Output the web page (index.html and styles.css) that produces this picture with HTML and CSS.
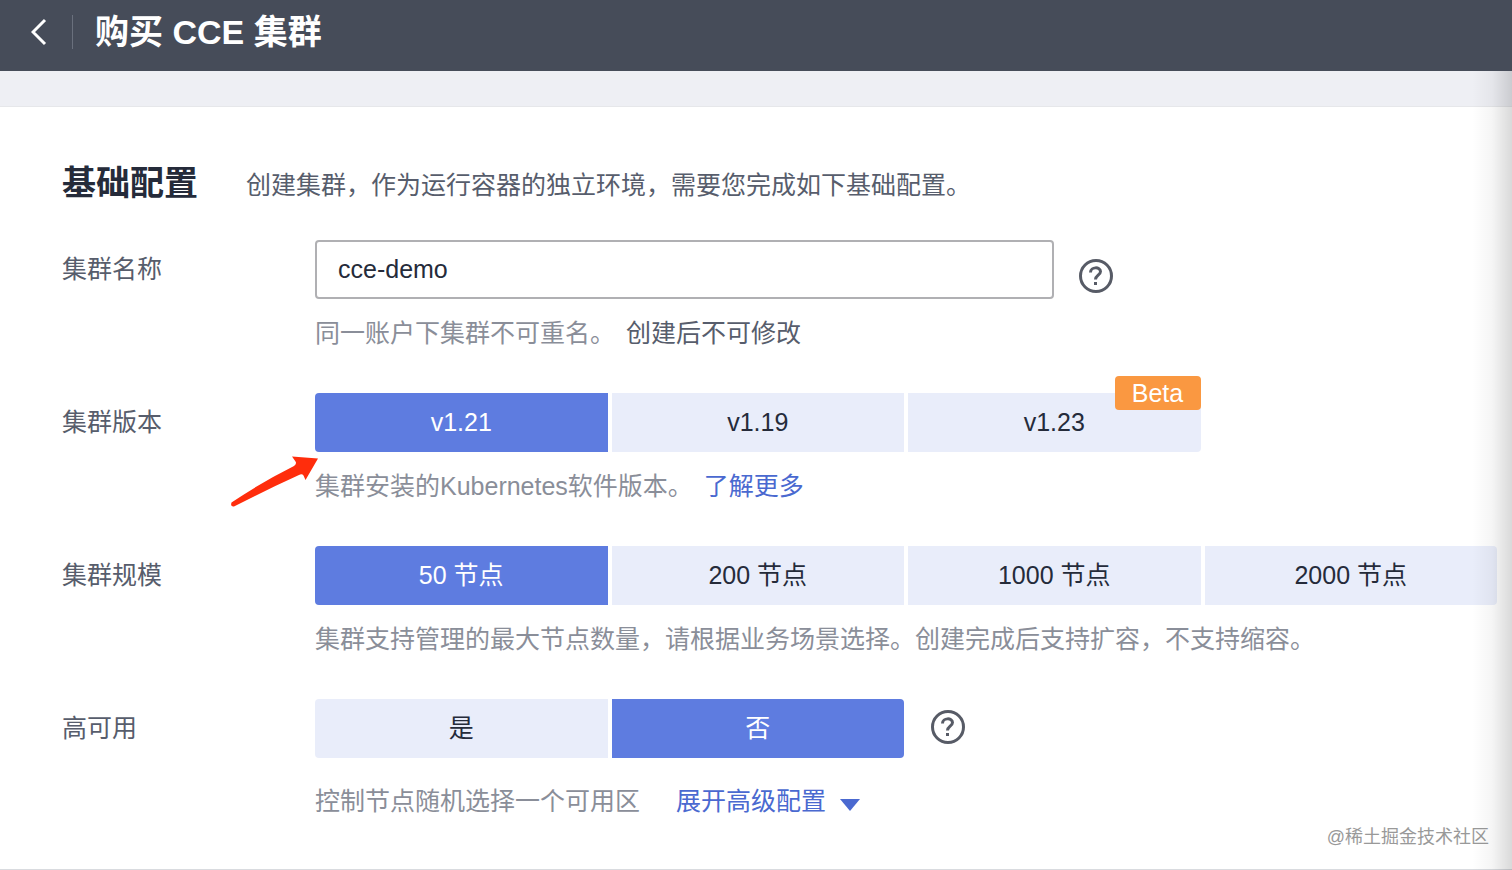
FILE: index.html
```html
<!DOCTYPE html>
<html lang="zh-CN">

<head>
    <meta charset="UTF-8">
    <meta name="viewport" content="width=device-width, initial-scale=1.0">
    <title>购买 CCE 集群</title>
    <link rel="stylesheet" href="styles.css">
</head>

<body>
    <header class="header">
        <a href="#" class="back" aria-label="返回">
            <svg width="16" height="28" viewBox="0 0 16 28"><path d="M14 2 L2 14 L14 26" /></svg>
        </a>
        <h1>购买 CCE 集群</h1>
    </header>
    <main class="content">
        <div class="section-title">
            <h2>基础配置</h2>
            <p>创建集群，作为运行容器的独立环境，需要您完成如下基础配置。</p>
        </div>
        <form class="form">
            <div class="row">
                <label class="name" for="cluster-name">集群名称</label>
                <div class="field">
                    <div class="control">
                        <input type="text" id="cluster-name" value="cce-demo">
                        <button type="button" class="help low" aria-label="帮助">
                            <svg width="34" height="34" viewBox="0 0 34 34"><circle cx="17" cy="17" r="15.5" /><path d="M11.5 13.5 C11.5 7.5 21.5 7.5 21.5 12.5 C21.5 16 16.5 16.5 16.5 20.5" /><rect x="15" y="23" width="3" height="3" /></svg>
                        </button>
                    </div>
                    <p class="hint">同一账户下集群不可重名。 <span class="dark">创建后不可修改</span></p>
                </div>
            </div>
            <div class="row">
                <span class="name" id="version">集群版本</span>
                <div class="field">
                    <div class="options" role="group" aria-labelledby="version">
                        <button type="button" class="option first active">v1.21</button>
                        <button type="button" class="option">v1.19</button>
                        <button type="button" class="option last">v1.23<span class="badge">Beta</span></button>
                    </div>
                    <p class="hint">集群安装的Kubernetes软件版本。 <a href="#">了解更多</a></p>
                    <svg class="arrow" width="90" height="54" viewBox="0 0 90 54"><path d="M1.5 48.5 Q32 28 64 12 Q67 10 65.5 7.5 L62 2.5 L88 4.5 L75.5 26 L73.5 21.5 Q72 19.5 69 21 Q36 36 4 52.5 Q0 53 1.5 48.5 Z" /></svg>
                </div>
            </div>
            <div class="row">
                <span class="name" id="scale">集群规模</span>
                <div class="field">
                    <div class="options" role="group" aria-labelledby="scale">
                        <button type="button" class="option first active">50 节点</button>
                        <button type="button" class="option">200 节点</button>
                        <button type="button" class="option">1000 节点</button>
                        <button type="button" class="option last">2000 节点</button>
                    </div>
                    <p class="hint">集群支持管理的最大节点数量，请根据业务场景选择。创建完成后支持扩容，不支持缩容。</p>
                </div>
            </div>
            <div class="row">
                <span class="name" id="ha">高可用</span>
                <div class="field">
                    <div class="options" role="group" aria-labelledby="ha">
                        <button type="button" class="option first">是</button>
                        <button type="button" class="option last active">否</button>
                        <button type="button" class="help side" aria-label="帮助">
                            <svg width="34" height="34" viewBox="0 0 34 34"><circle cx="17" cy="17" r="15.5" /><path d="M11.5 13.5 C11.5 7.5 21.5 7.5 21.5 12.5 C21.5 16 16.5 16.5 16.5 20.5" /><rect x="15" y="23" width="3" height="3" /></svg>
                        </button>
                    </div>
                    <div class="hint advanced">
                        <span>控制节点随机选择一个可用区</span>
                        <a href="#">展开高级配置<svg width="20" height="12" viewBox="0 0 20 12"><path d="M0 0 H20 L10 12 Z" /></svg></a>
                    </div>
                </div>
            </div>
        </form>
        <span class="watermark">@稀土掘金技术社区</span>
    </main>
    <div class="edge"></div>
</body>

</html>
```

FILE: styles.css
```css
* {
    padding: 0;
    margin: 0;
    box-sizing: border-box;
}

body {
    position: relative;
    font-family: "Liberation Sans", "Noto Sans CJK SC", sans-serif;
    font-size: 25px;
    line-height: 36px;
    color: #575d6c;
    background: white;
}

button,
input {
    font: inherit;
    color: #252b3a;
}

button {
    border: none;
    cursor: pointer;
}

a {
    color: #4a69d0;
    text-decoration: none;
}

.header {
    height: 71px;
    padding: 0 31px 8px;
    display: flex;
    align-items: center;
    background: #464c59;
}

.back {
    height: 34px;
    padding-right: 25px;
    display: flex;
    align-items: center;
    border-right: 1px solid #6a707d;
}

.back path {
    fill: none;
    stroke: white;
    stroke-width: 3;
}

h1 {
    margin-left: 22px;
    font-size: 34px;
    line-height: 48px;
    color: white;
}

.content {
    position: relative;
    padding: 54px 15px 50px 62px;
    border-top: 35px solid #eeeff4;
    border-bottom: 1px solid #d9dbdf;
    box-shadow: inset 0 1px #e6e7ea;
}

.section-title {
    margin-bottom: 34px;
    display: flex;
    align-items: center;
}

h2 {
    width: 184px;
    font-size: 34px;
    line-height: 46px;
    color: #252b3a;
}

.section-title p {
    margin-top: 4px;
}

.form {
    display: flex;
    flex-direction: column;
    gap: 42px;
}

.row {
    display: grid;
    grid-template-columns: 253px 1fr;
}

.name {
    line-height: 58px;
}

.field {
    position: relative;
}

.control {
    display: flex;
    gap: 25px;
}

.control input {
    width: 739px;
    height: 59px;
    padding: 0 21px;
    border: 2px solid #b0b0b3;
    border-radius: 4px;
    background: white;
}

.control input:focus {
    outline: none;
}

.options {
    display: grid;
    grid-template-columns: repeat(4, 1fr);
    gap: 4px;
}

.option {
    position: relative;
    height: 59px;
    padding-bottom: 2px;
    background: #e9edfa;
}

.first {
    border-radius: 4px 0 0 4px;
}

.last {
    border-radius: 0 4px 4px 0;
}

.active {
    color: white;
    background: #5e7ce0;
}

.badge {
    position: absolute;
    top: -17px;
    right: 0;
    width: 86px;
    line-height: 34px;
    color: white;
    background: #fa9841;
    border-radius: 4px;
}

.help {
    width: 34px;
    height: 34px;
    align-self: center;
    background: none;
}

.help svg {
    display: block;
    fill: none;
    stroke: #575b66;
    stroke-width: 3;
}

.help rect {
    fill: #575b66;
    stroke: none;
}

.low {
    margin-top: 12px;
}

.side {
    margin-left: 23px;
    margin-bottom: 4px;
}

.hint {
    margin-top: 16px;
    color: #8a8e99;
}

.dark {
    margin-left: 4px;
    color: #575d6c;
}

.hint a {
    margin-left: 4px;
}

.advanced {
    margin-top: 25px;
    display: flex;
    gap: 32px;
}

.advanced a {
    display: flex;
    align-items: center;
    gap: 14px;
}

.advanced svg {
    margin-top: 8px;
    fill: #4a69d0;
}

/* points at the selected version */
.arrow {
    position: absolute;
    top: 61px;
    left: -85px;
    fill: #ff2d0c;
}

.watermark {
    position: absolute;
    right: 23px;
    bottom: 14px;
    font-size: 18px;
    color: #999;
}

.edge {
    position: absolute;
    top: 71px;
    right: 0;
    bottom: 0;
    width: 40px;
    background: linear-gradient(to right, rgba(0, 0, 0, 0), rgba(0, 0, 0, 0.04) 50%, rgba(0, 0, 0, 0.15));
    pointer-events: none;
}
```
